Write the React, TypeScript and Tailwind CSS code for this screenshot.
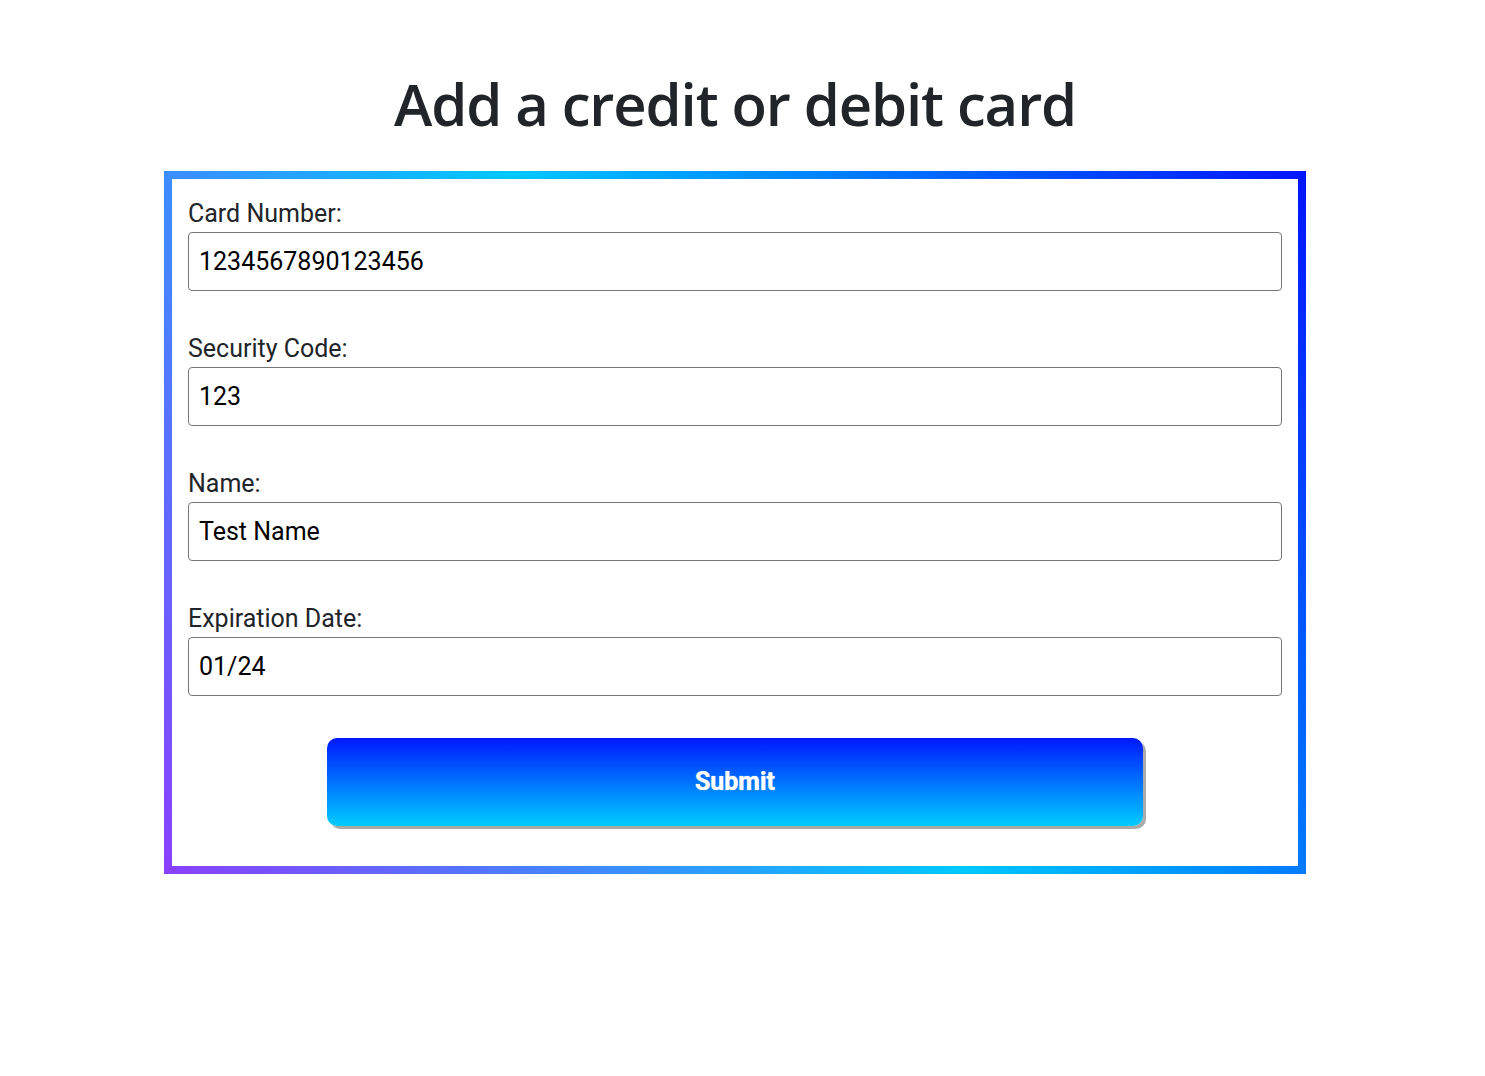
import { useState } from "react";

const fields = [
    { id: "cardNumber", label: "Card Number:", value: "1234567890123456" },
    { id: "securityCode", label: "Security Code:", value: "123" },
    { id: "name", label: "Name:", value: "Test Name" },
    { id: "expiration", label: "Expiration Date:", value: "01/24" },
];

function App() {
    const [values, setValues] = useState<Record<string, string>>(
        Object.fromEntries(fields.map((f) => [f.id, f.value]))
    );

    return (
        <div className="min-h-screen bg-white w-[1470px] flex flex-col items-center pt-[66px]">
            <h1 className="font-['Open_Sans',sans-serif] font-semibold text-[58px] leading-[76px] text-[#212529] tracking-[-1.1px]">
                Add a credit or debit card
            </h1>
            {/* gradient frame */}
            <div className="mt-[29px] w-[1142px] p-[8px] bg-[linear-gradient(57deg,#8a40ff,#00c8ff,#0014ff)]">
                <form
                    className="bg-white px-4 pt-4 pb-[40px] flex flex-col gap-[39px] font-['Roboto',sans-serif]"
                    onSubmit={(e) => e.preventDefault()}
                >
                    {fields.map((f) => (
                        <div key={f.id} className="flex flex-col">
                            <label htmlFor={f.id} className="text-[25px] leading-[37px] text-[#212529]">
                                {f.label}
                            </label>
                            <input
                                id={f.id}
                                value={values[f.id]}
                                onChange={(e) => setValues({ ...values, [f.id]: e.target.value })}
                                className="h-[59px] border border-[#767676] rounded-[4px] px-[10px] text-[25px] text-black outline-none"
                            />
                        </div>
                    ))}
                    <button
                        type="submit"
                        className="mt-[3px] self-center w-[816px] h-[88px] rounded-[10px] bg-[linear-gradient(to_bottom,#0018ff,#00ccff)] shadow-[3px_3px_0_#aaaaaa] text-white font-bold text-[25px] [text-shadow:0_0_1px_#ffffff]"
                    >
                        Submit
                    </button>
                </form>
            </div>
        </div>
    );
}

export default App;
